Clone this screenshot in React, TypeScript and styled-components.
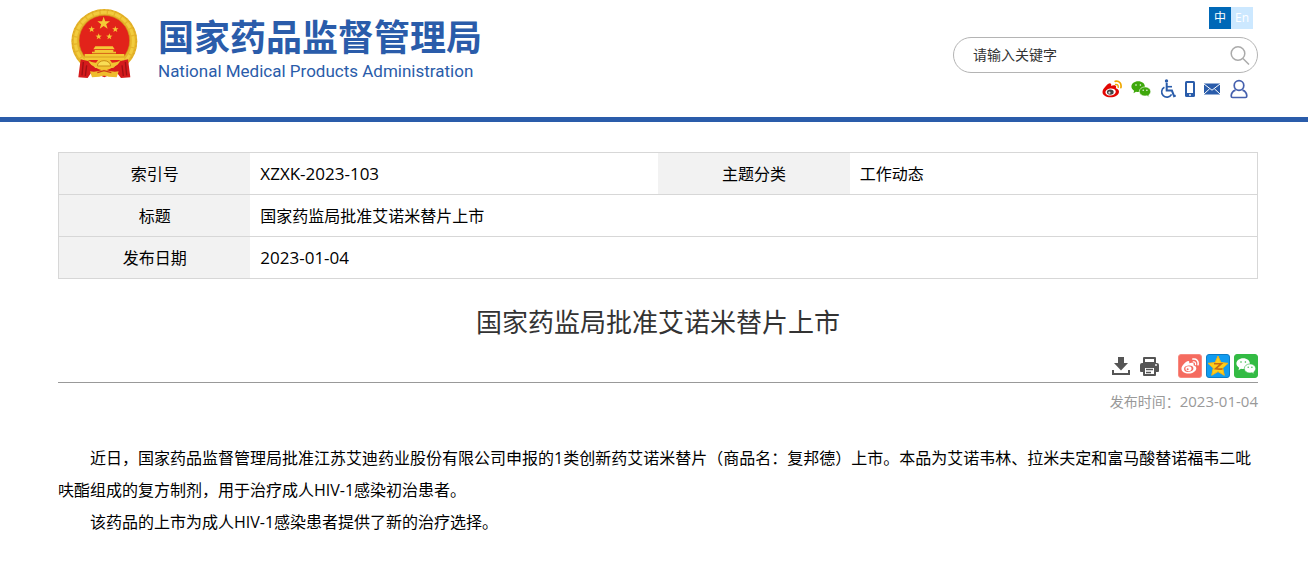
import React from "react";
import styled, { createGlobalStyle } from "styled-components";

const BLUE = "#2a5caa";
const CJK = `"Open Sans", "Noto Sans CJK SC", sans-serif`;

const GlobalStyle = createGlobalStyle`
  *, *::before, *::after { box-sizing: border-box; }
  body {
    margin: 0;
    background: #fff;
    color: #000;
    font-family: ${CJK};
    font-size: 16px;
    text-spacing-trim: space-all;
  }
  svg { display: block; flex: none; }
`;

const Header = styled.header`
  display: flex;
  justify-content: space-between;
  align-items: flex-start;
  padding: 7px 50px 18px 70px;
  border-bottom: 5px solid ${BLUE};
`;

const Brand = styled.a`
  display: flex;
  gap: 19px;
  color: ${BLUE};
  text-decoration: none;
`;

const BrandText = styled.div`
  display: flex;
  flex-direction: column;
  padding-top: 6px;
`;

const BrandName = styled.span`
  font-family: "Noto Sans CJK SC", sans-serif;
  font-size: 36px;
  font-weight: 700;
  line-height: 44px;
`;

const BrandSub = styled.span`
  font-family: Roboto, "Liberation Sans", sans-serif;
  font-size: 17px;
  line-height: 28px;
`;

const Tools = styled.div`
  display: flex;
  flex-direction: column;
  align-items: flex-end;
  width: 305px;
`;

const Languages = styled.nav`
  display: flex;
  padding-right: 5px;
`;

const Language = styled.a<{ $active?: boolean }>`
  width: 22px;
  height: 22px;
  line-height: 22px;
  font-size: 12px;
  text-align: center;
  text-decoration: none;
  color: #fff;
  background: ${(p) => (p.$active ? "#0068b7" : "#cce8ff")};
`;

const Search = styled.form`
  display: flex;
  align-items: center;
  width: 100%;
  height: 36px;
  margin: 8px 0 6px;
  padding: 0 7px 0 19px;
  border: 1px solid #b4b4b4;
  border-radius: 18px;
`;

const SearchInput = styled.input`
  flex: 1;
  min-width: 0;
  padding: 0;
  border: 0;
  outline: 0;
  background: none;
  font: 14px/20px ${CJK};
  color: #333;
  &::placeholder { color: #333; opacity: 1; }
`;

const IconButton = styled.button`
  display: flex;
  padding: 0;
  border: 0;
  background: none;
  cursor: pointer;
`;

const QuickLinks = styled.nav`
  display: flex;
  align-items: center;
  gap: 9px;
  height: 20px;
  padding-right: 10px;
`;

const IconLink = styled.a`
  display: flex;
  color: ${BLUE};
`;

const Main = styled.main`
  padding: 30px 50px 28px 58px;
`;

const InfoTable = styled.table`
  width: 100%;
  table-layout: fixed;
  border-collapse: collapse;
  border: 1px solid #d7d7d7;
`;

const InfoRow = styled.tr`
  height: 42px;
  border-bottom: 1px solid #d7d7d7;
`;

const Label = styled.th`
  width: 16%;
  padding: 0;
  background: #f2f2f2;
  font-weight: 400;
  line-height: 24px;
  text-align: center;
`;

const Value = styled.td`
  padding: 0 10px;
  line-height: 24px;
`;

const Latin = styled.span<{ $small?: boolean }>`
  font-family: "Open Sans", sans-serif;
  font-size: ${(p) => (p.$small ? 15 : 17)}px;
  line-height: 1;
`;

const Title = styled.h1`
  margin: 23px 0 12px;
  font-size: 26px;
  font-weight: 400;
  line-height: 40px;
  text-align: center;
  color: #333;
`;

const Toolbar = styled.div`
  display: flex;
  justify-content: flex-end;
  align-items: center;
  gap: 19px;
  padding-bottom: 4px;
  border-bottom: 1px solid #999;
`;

const Group = styled.div<{ $gap: number }>`
  display: flex;
  gap: ${(p) => p.$gap}px;
`;

const Published = styled.p`
  margin: 8px 0 29px;
  font-size: 14px;
  line-height: 22px;
  text-align: right;
  color: #999;
`;

const Paragraph = styled.p`
  margin: 0;
  line-height: 32px;
  text-indent: 2em;
`;

const star = (cx: number, cy: number, r: number) =>
  Array.from({ length: 10 }, (_, i) => {
    const a = -Math.PI / 2 + (i * Math.PI) / 5;
    const d = i % 2 ? r * 0.4 : r;
    return `${(cx + d * Math.cos(a)).toFixed(1)},${(cy + d * Math.sin(a)).toFixed(1)}`;
  }).join(" ");

const Emblem = () => (
  <svg width="69" height="74" viewBox="30 21 207 222" aria-hidden="true">
    <ellipse cx="133" cy="124" rx="99" ry="97" fill="#e6b52a" />
    <ellipse cx="133" cy="124" rx="96" ry="94" fill="none" stroke="#dba422" strokeWidth="3" strokeDasharray="5 7" />
    <ellipse cx="133" cy="123" rx="87" ry="86" fill="none" stroke="#f2cc3e" strokeWidth="9" strokeDasharray="18 4" />
    <circle cx="133" cy="122" r="76" fill="#e2231a" stroke="#cf9418" strokeWidth="2" />
    <g fill="#f4c936">
      <polygon points={star(131, 70, 20)} />
      <polygon points={star(95, 88, 10)} />
      <polygon points={star(166, 88, 10)} />
      <polygon points={star(116, 110, 10)} />
      <polygon points={star(148, 110, 10)} />
      <path d="M106 139h52l6 9h-64z" />
      <path d="M104 150h56v5h8v5H96v-5h8z" />
      <path d="M74 162h119v18H74z" />
    </g>
    <path d="M98 160h70M74 171h119" stroke="#cf8a17" strokeWidth="2" />
    <path d="M62 178l24 6 20 20h54l20-20 24-6 7 54-28 2-14-18-36 16-38-16-12 18-28-2z" fill="#d51a1c" />
    <path d="M70 186l-4 40M80 196l-4 32M196 186l4 40M186 196l4 32" stroke="#9e1014" strokeWidth="4" />
    <path d="M86 184q12 4 22 4l8-10h32l8 10q12 0 24-4-6 14-22 16-8 10-26 10t-26-10q-14-2-20-16z" fill="#f2c433" />
    <path d="M112 198a20 16 0 0 1 40 0z" fill="#f9dd55" stroke="#c98c16" strokeWidth="3" />
    <path d="M90 214q20 4 42-6 24 10 44 6l-6 18-24-2q-14-6-28 0l-22 2z" fill="#eebc2d" />
    <path d="M112 218l20-6 22 6" fill="none" stroke="#cf3b18" strokeWidth="4" />
  </svg>
);

const SearchIcon = () => (
  <svg width="20" height="20" viewBox="0 0 20 20" fill="none" stroke="#aaa" strokeWidth="1.5">
    <circle cx="8" cy="8.500" r="6.800" />
    <path d="M13 13.500l6 6" />
  </svg>
);

const WeiboIcon = ({ mono, size = 20 }: { mono?: boolean; size?: number }) => {
  const body = mono ? "#fff" : "#e10602";
  const wave = mono ? "#fff" : "#f0a800";
  return (
    <svg width={size} height={size} viewBox="0 0 20 20">
      <path
        d="M8.4 4.4c1.2.4.9 1.7.6 2.600 1.800-.8 4.400-1.200 5 .3.3.7 0 1.300-.2 1.900 1.700.5 3.300 1.500 3.200 3.500-.1 3.200-4.200 5.600-8.500 5.600C4 18.300.5 16.200.5 13c0-2 1.400-4 3.200-5.800C5.400 5.500 7.200 4 8.400 4.400z"
        fill={body}
      />
      <ellipse cx="8.600" cy="13" rx="5.200" ry="3.500" fill={mono ? "#f56b5f" : "#fff"} transform="rotate(-8 8.600 13)" />
      <ellipse cx="8.300" cy="13.100" rx="3.400" ry="2.700" fill={mono ? "#fff" : "#444"} />
      <circle cx="7.400" cy="13.700" r="1.100" fill={mono ? "#f56b5f" : "#ddd"} />
      <path d="M13.600 5.500c1.800-.3 2.900.8 2.600 2.900" fill="none" stroke={wave} strokeWidth="1.400" strokeLinecap="round" />
      <path d="M13.200 2.300c3.800-.8 6.600 2 5.700 6.300" fill="none" stroke={wave} strokeWidth="1.700" strokeLinecap="round" />
    </svg>
  );
};

const WechatIcon = ({ color, eye }: { color: string; eye: string }) => (
  <svg width="20" height="20" viewBox="0 0 20 20">
    <path d="M7.200 2.200c3.800 0 6.700 2.300 6.700 5.400s-2.900 5.400-6.700 5.400c-.8 0-1.500-.1-2.200-.3l-2.500 1.500.6-2.400C1.400 10.800.4 9.300.4 7.600c0-3.100 3-5.400 6.800-5.400z" fill={color} />
    <path d="M14 7.900c3.200 0 5.700 2 5.700 4.600 0 1.400-.8 2.600-2 3.500l.5 1.900-2.200-1.200c-.6.2-1.300.3-2 .3-3.200 0-5.700-2-5.700-4.500s2.500-4.600 5.700-4.600z" fill={color} stroke={eye} strokeWidth=".6" />
    <g fill={eye}>
      <circle cx="5" cy="6" r=".8" />
      <circle cx="9.400" cy="6" r=".8" />
      <circle cx="12.200" cy="11.300" r=".7" />
      <circle cx="15.900" cy="11.300" r=".7" />
    </g>
  </svg>
);

const WheelchairIcon = () => (
  <svg width="16" height="20" viewBox="0 0 16 20" fill="none" stroke="currentColor">
    <circle cx="6.500" cy="2" r="1.700" fill="currentColor" stroke="none" />
    <path d="M6.700 4v7.600h5.200l2.200 5.600 1.700-.6" strokeWidth="2" />
    <path d="M7 7.700h5" strokeWidth="1.600" />
    <path d="M4.400 8.200a5.300 5.300 0 1 0 7.200 7.200" strokeWidth="1.600" />
  </svg>
);

const PhoneIcon = () => (
  <svg width="10" height="18" viewBox="0 0 10 18">
    <rect y="1" width="10" height="16" rx="1.500" fill="currentColor" />
    <rect x="2" y="3" width="6" height="10" fill="#fff" />
    <circle cx="5" cy="15" r=".9" fill="#fff" />
  </svg>
);

const MailIcon = () => (
  <svg width="16" height="12" viewBox="0 0 16 12">
    <rect y=".5" width="16" height="11" fill="currentColor" />
    <path d="M0 1l8 6.200L16 1M0 11l5.600-5.200M16 11l-5.600-5.200" fill="none" stroke="#fff" strokeWidth="1" />
  </svg>
);

const UserIcon = () => (
  <svg width="19" height="20" viewBox="0 0 19 20" fill="none" stroke="#4560ae" strokeWidth="1.700">
    <circle cx="10" cy="6.500" r="4.800" />
    <path d="M6.500 11.100c-2.600 1-4.300 3.200-4.300 6 0 .9.500 1.400 1.400 1.400h12.800c.9 0 1.400-.5 1.400-1.400 0-2.800-1.700-5-4.300-6" />
  </svg>
);

const DownloadIcon = () => (
  <svg width="18" height="24" viewBox="0 0 18 24" fill="#555">
    <path d="M6 3h6v6h4l-7 7.500L2 9h4z" />
    <path d="M0 16h2v3h14v-3h2v5H0z" />
  </svg>
);

const PrintIcon = () => (
  <svg width="19" height="24" viewBox="0 0 19 24">
    <path d="M4 4h11v5H4z" fill="#fff" stroke="#555" strokeWidth="2" strokeLinejoin="round" />
    <path d="M2 9h15a2 2 0 0 1 2 2v6a1 1 0 0 1-1 1H1a1 1 0 0 1-1-1v-6a2 2 0 0 1 2-2z" fill="#555" />
    <path d="M4 13h11v8H4z" fill="#fff" stroke="#555" strokeWidth="2" strokeLinejoin="round" />
    <path d="M6 15.500h7M6 18.500h5" stroke="#555" strokeWidth="1.400" />
    <circle cx="16" cy="11" r=".9" fill="#fff" />
  </svg>
);

const ShareButton = styled.button<{ $bg: string; $edge: string }>`
  display: flex;
  align-items: center;
  justify-content: center;
  width: 24px;
  height: 24px;
  padding: 0;
  border: 1px solid ${(p) => p.$edge};
  border-radius: 3px;
  background: ${(p) => p.$bg};
  cursor: pointer;
`;

const QzoneIcon = () => (
  <svg width="22" height="22" viewBox="0 0 22 22">
    <polygon points="11,1 13.900,7.600 21,8.300 15.700,13.100 17.300,20.300 11,16.600 4.700,20.300 6.300,13.100 1,8.300 8.100,7.600" fill="#fdce1c" stroke="#f7b512" strokeWidth="1" strokeLinejoin="round" />
    <path d="M7 8.700h7.300l-5.800 5.100c2.500.5 4.800.4 7 .1" fill="none" stroke="#c76a13" strokeWidth="1.600" />
  </svg>
);

export default function App() {
  return (
    <>
      <GlobalStyle />
      <Header>
        <Brand href="#">
          <Emblem />
          <BrandText>
            <BrandName>国家药品监督管理局</BrandName>
            <BrandSub>National Medical Products Administration</BrandSub>
          </BrandText>
        </Brand>
        <Tools>
          <Languages>
            <Language href="#" $active>中</Language>
            <Language href="#">En</Language>
          </Languages>
          <Search onSubmit={(e) => e.preventDefault()}>
            <SearchInput type="text" placeholder="请输入关键字" aria-label="请输入关键字" />
            <IconButton type="submit" aria-label="搜索"><SearchIcon /></IconButton>
          </Search>
          <QuickLinks>
            <IconLink href="#" aria-label="微博"><WeiboIcon /></IconLink>
            <IconLink href="#" aria-label="微信"><WechatIcon color="#3fa80c" eye="#fff" /></IconLink>
            <IconLink href="#" aria-label="无障碍"><WheelchairIcon /></IconLink>
            <IconLink href="#" aria-label="手机版"><PhoneIcon /></IconLink>
            <IconLink href="#" aria-label="邮箱"><MailIcon /></IconLink>
            <IconLink href="#" aria-label="个人中心"><UserIcon /></IconLink>
          </QuickLinks>
        </Tools>
      </Header>
      <Main>
        <InfoTable>
          <tbody>
            <InfoRow>
              <Label scope="row">索引号</Label>
              <Value><Latin>XZXK-2023-103</Latin></Value>
              <Label scope="row">主题分类</Label>
              <Value>工作动态</Value>
            </InfoRow>
            <InfoRow>
              <Label scope="row">标题</Label>
              <Value colSpan={3}>国家药监局批准艾诺米替片上市</Value>
            </InfoRow>
            <InfoRow>
              <Label scope="row">发布日期</Label>
              <Value colSpan={3}><Latin>2023-01-04</Latin></Value>
            </InfoRow>
          </tbody>
        </InfoTable>
        <Title>国家药监局批准艾诺米替片上市</Title>
        <Toolbar>
          <Group $gap={10}>
            <IconButton type="button" aria-label="下载"><DownloadIcon /></IconButton>
            <IconButton type="button" aria-label="打印"><PrintIcon /></IconButton>
          </Group>
          <Group $gap={4}>
            <ShareButton type="button" aria-label="分享到微博" $bg="#f56b5f" $edge="#f8897f"><WeiboIcon mono size={18} /></ShareButton>
            <ShareButton type="button" aria-label="分享到QQ空间" $bg="#119cf0" $edge="#0d7cc4"><QzoneIcon /></ShareButton>
            <ShareButton type="button" aria-label="分享到微信" $bg="#33bb44" $edge="#33bb44"><WechatIcon color="#fff" eye="#33bb44" /></ShareButton>
          </Group>
        </Toolbar>
        <Published>发布时间：<Latin $small>2023-01-04</Latin></Published>
        <Paragraph>
          近日，国家药品监督管理局批准江苏艾迪药业股份有限公司申报的1类创新药艾诺米替片（商品名：复邦德）上市。本品为艾诺韦林、拉米夫定和富马酸替诺福韦二吡呋酯组成的复方制剂，用于治疗成人HIV-1感染初治患者。
        </Paragraph>
        <Paragraph>
          该药品的上市为成人HIV-1感染患者提供了新的治疗选择。
        </Paragraph>
      </Main>
    </>
  );
}
